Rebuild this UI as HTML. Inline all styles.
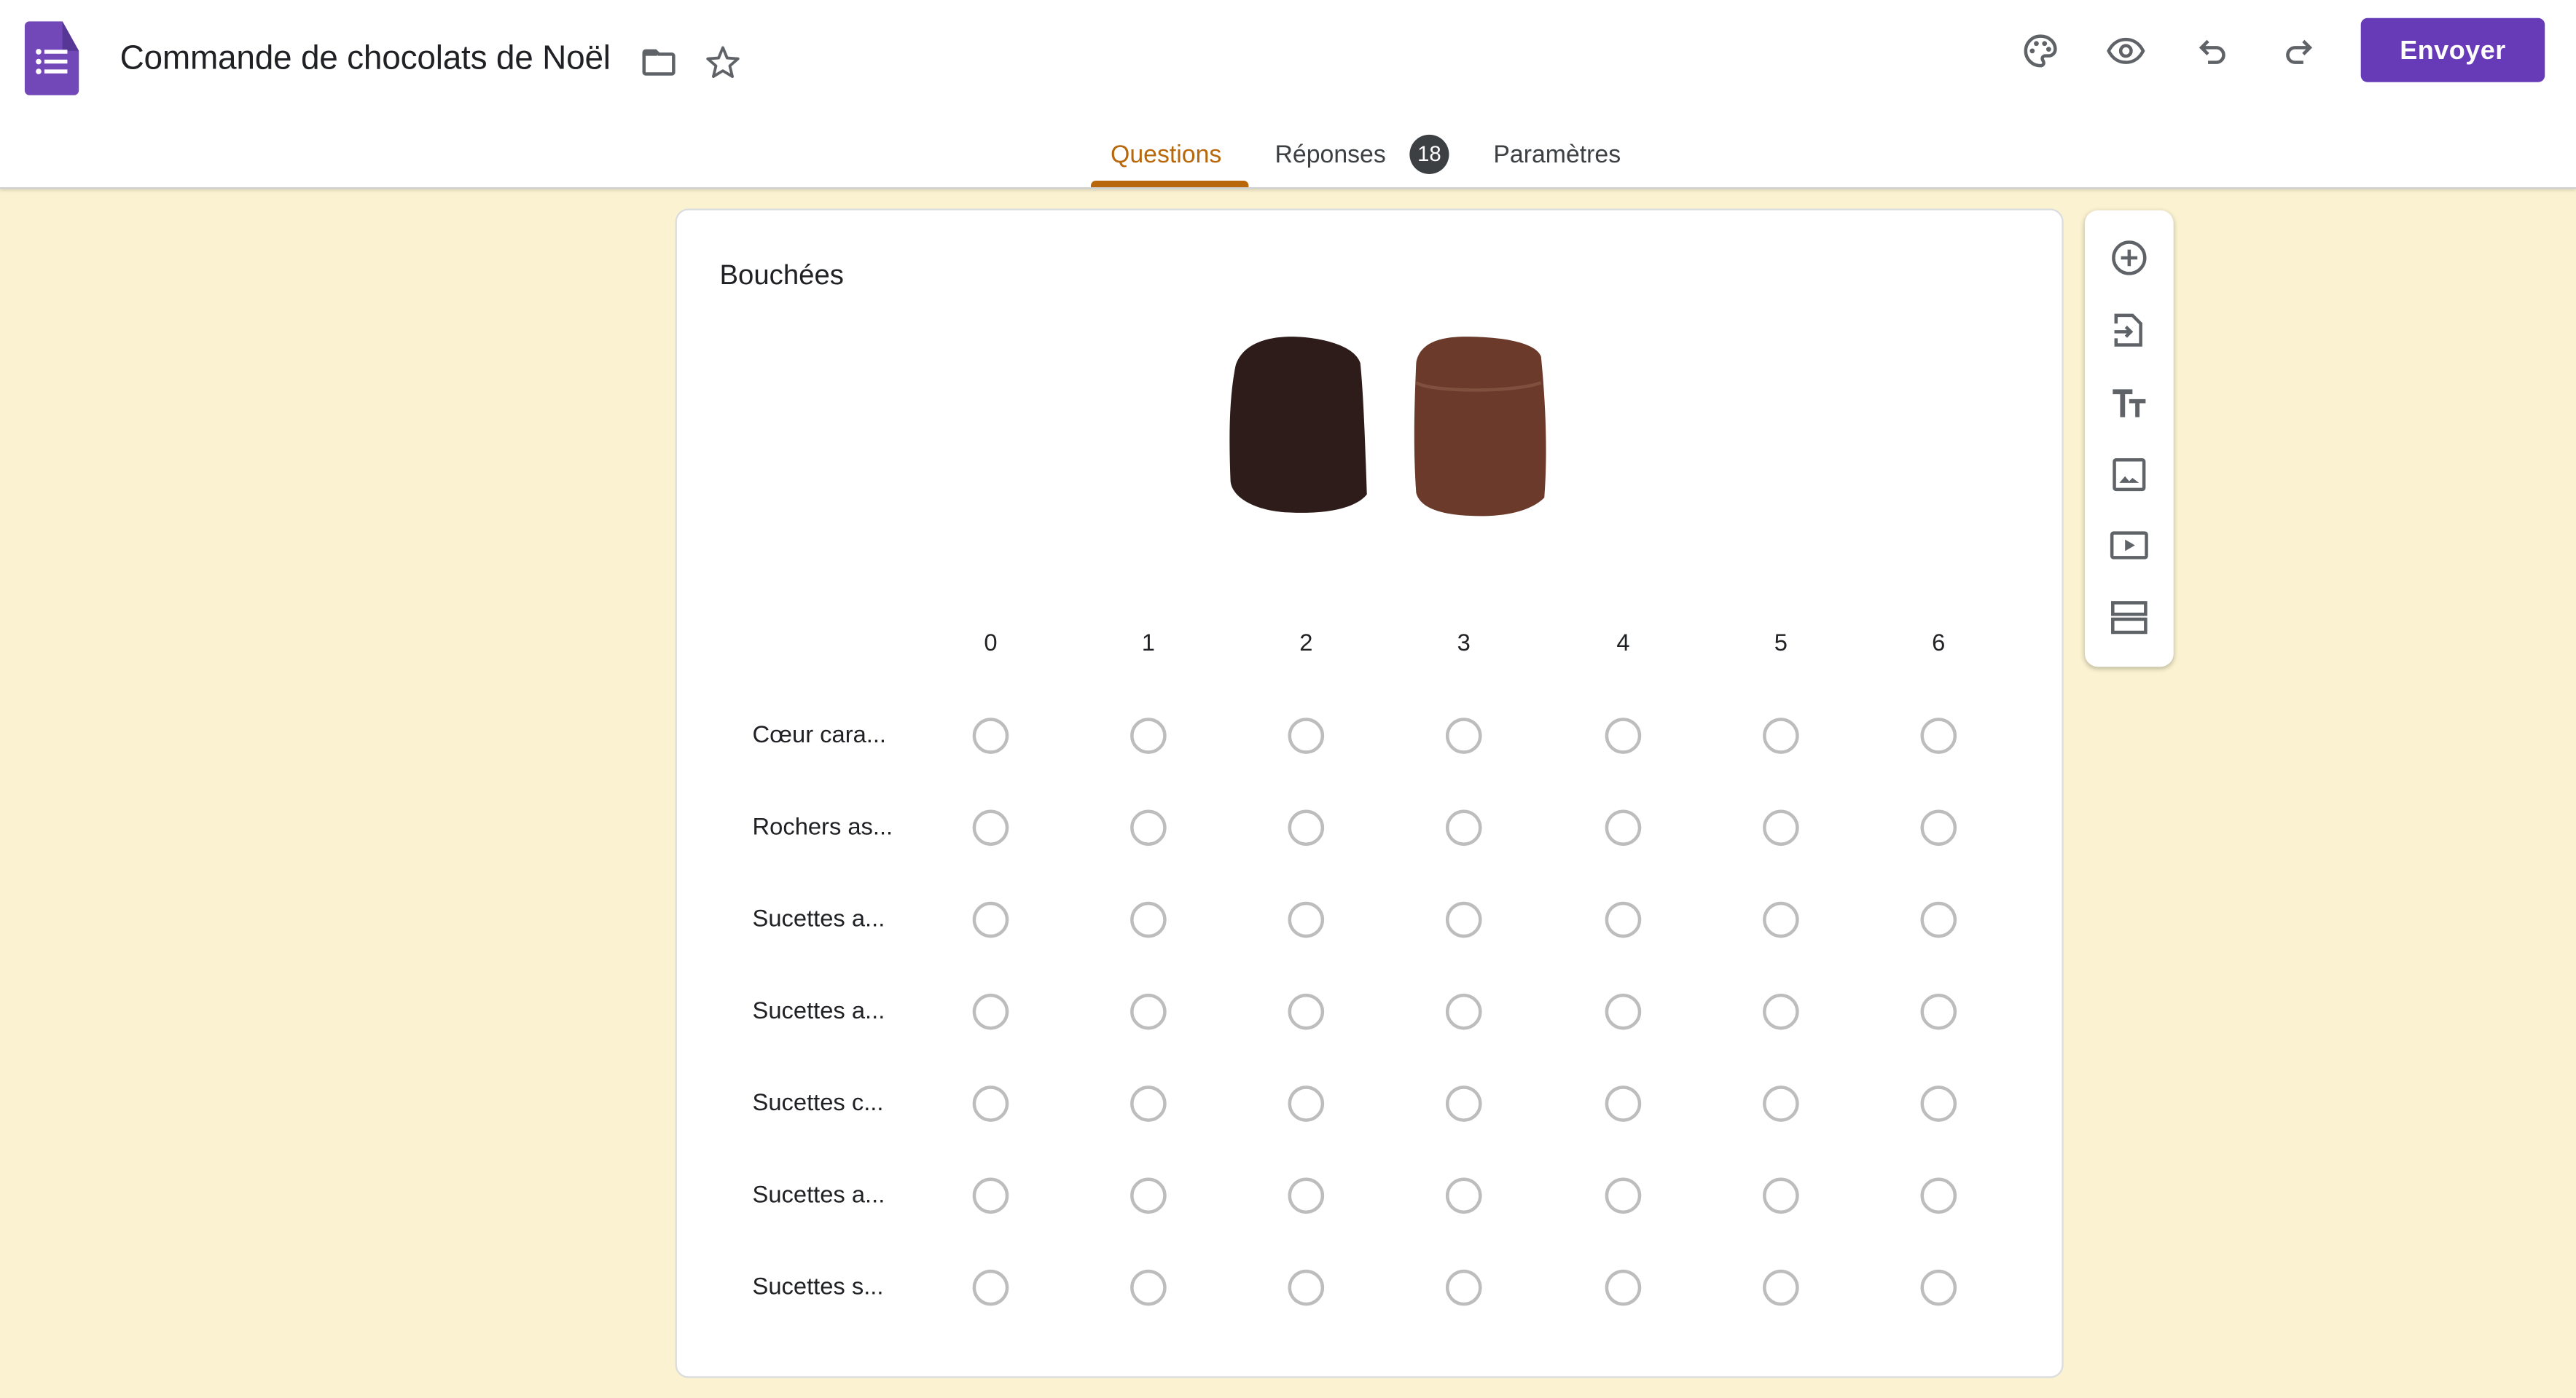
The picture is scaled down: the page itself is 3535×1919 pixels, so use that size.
<!DOCTYPE html>
<html><head><meta charset="utf-8"><style>
html,body{margin:0;padding:0;width:3535px;height:1919px;overflow:hidden;background:#faf2d0}
#w{position:absolute;left:0;top:0;width:1568px;height:851px;transform:scale(2.2545);transform-origin:0 0;font-family:"Liberation Sans",sans-serif;color:#202124}
.a{position:absolute}
.hdr{left:0;top:0;width:1568px;height:114px;background:#fff;border-bottom:1px solid #d0d0d0;box-shadow:0 1px 2px rgba(0,0,0,.15)}
.r{position:absolute;width:18px;height:18px;border:2px solid #bdbdbd;border-radius:50%}
.rl{position:absolute;left:458px;font-size:14.5px;color:#202124}
.cl{position:absolute;font-size:14.5px;width:20px;text-align:center}
svg.i{position:absolute}
</style></head><body><div id="w">
<div class="a hdr"></div>
<svg class="i" style="left:15px;top:13px" width="34" height="45" viewBox="0 0 34 45"><path d="M3 0H23L33 18V42a3 3 0 0 1-3 3H3a3 3 0 0 1-3-3V3a3 3 0 0 1 3-3z" fill="#7248b9"/><path d="M23 0L33 18H23z" fill="#563795"/><g fill="#fff"><circle cx="8.5" cy="18.5" r="1.7"/><circle cx="8.5" cy="24.5" r="1.7"/><circle cx="8.5" cy="30.5" r="1.7"/><rect x="12" y="17.3" width="14" height="2.4"/><rect x="12" y="23.3" width="14" height="2.4"/><rect x="12" y="29.3" width="14" height="2.4"/></g></svg>
<div class="a" style="left:73px;top:25px;font-size:20.4px;letter-spacing:-0.1px">Commande de chocolats de Noël</div>
<svg class="i" style="left:389px;top:26px" width="24" height="24" viewBox="0 0 24 24"><path d="M4 5h6l2 2h8a1 1 0 0 1 1 1v10a1 1 0 0 1-1 1H4a1 1 0 0 1-1-1V6a1 1 0 0 1 1-1z" fill="none" stroke="#5f6368" stroke-width="2"/><rect x="3" y="5" width="8" height="3" fill="#5f6368"/></svg>
<svg class="i" style="left:428px;top:26px" width="24" height="24" viewBox="0 0 24 24"><path d="M12 3l2.6 6.3 6.6.5-5 4.3 1.6 6.5L12 17.1l-5.8 3.5 1.6-6.5-5-4.3 6.6-.5z" fill="none" stroke="#5f6368" stroke-width="1.7" stroke-linejoin="round"/></svg>
<svg class="i" style="left:1230px;top:19px" width="24" height="24" viewBox="0 0 24 24"><path d="M12 3a9 9 0 0 0 0 18c1.3 0 2-.8 2-1.8 0-1-.9-1.5-.9-2.5 0-1 .8-1.700 1.8-1.700H17a4 4 0 0 0 4-4C21 6.5 17 3 12 3z" fill="none" stroke="#5f6368" stroke-width="2"/><g fill="#5f6368"><circle cx="7" cy="12" r="1.5"/><circle cx="9.5" cy="7.5" r="1.5"/><circle cx="14.5" cy="7.5" r="1.5"/><circle cx="17" cy="11" r="1.5"/></g></svg>
<svg class="i" style="left:1282px;top:19px" width="24" height="24" viewBox="0 0 24 24"><path d="M1.5 12C4 7 8 5 12 5s8 2 10.5 7C20 17 16 19 12 19s-8-2-10.5-7z" fill="none" stroke="#5f6368" stroke-width="2"/><circle cx="12" cy="12" r="3.2" fill="none" stroke="#5f6368" stroke-width="2"/></svg>
<svg class="i" style="left:1335px;top:19px" width="24" height="24" viewBox="0 0 24 24"><path d="M9 6L5 10l4 4M5 10h9a4.5 4.5 0 0 1 0 9H9" fill="none" stroke="#5f6368" stroke-width="2"/></svg>
<svg class="i" style="left:1387px;top:19px" width="24" height="24" viewBox="0 0 24 24"><path d="M15 6l4 4-4 4M19 10h-9a4.5 4.5 0 0 0 0 9h5" fill="none" stroke="#5f6368" stroke-width="2"/></svg>
<div class="a" style="left:1437px;top:11px;width:112px;height:39px;background:#673ab7;border-radius:4px;color:#fff;font-size:16px;font-weight:bold;line-height:41px;text-align:center;letter-spacing:.2px">Envoyer</div>
<div class="a" style="left:676px;top:86px;font-size:15px;color:#b8680a">Questions</div>
<div class="a" style="left:664px;top:110px;width:96px;height:4px;background:#b8680a;border-radius:3px 3px 0 0"></div>
<div class="a" style="left:776px;top:86px;font-size:15px;color:#3c4043">Réponses</div>
<div class="a" style="left:858px;top:82px;width:24px;height:24px;border-radius:50%;background:#3c4043;color:#fff;font-size:13px;line-height:24px;text-align:center">18</div>
<div class="a" style="left:909px;top:86px;font-size:15px;color:#3c4043">Paramètres</div>
<div class="a" style="left:411px;top:127px;width:843px;height:710px;background:#fff;border:1px solid #dadce0;border-radius:8px"></div>
<div class="a" style="left:438px;top:158px;font-size:17px">Bouchées</div>
<svg class="i" style="left:744px;top:203px" width="205" height="114" viewBox="0 0 205 114"><path d="M8 20C12 6 28 2 42 2S80 6 84 18c2 20 3 50 4 80-8 10-30 12-48 11C20 108 6 100 5 90 4 65 4 40 8 20z" fill="#2e1c1a"/><path d="M118 18c2-12 14-16 30-16s42 2 46 12c3 30 4 60 2 86-10 10-30 12-46 11-20-1-30-6-32-14-2-28-1-55 0-79z" fill="#6b3a2a"/><path d="M118 30c10 6 60 6 76 0" stroke="#80503e" stroke-width="2" fill="none"/></svg>
<div class="cl" style="left:593px;top:384px">0</div><div class="cl" style="left:689px;top:384px">1</div><div class="cl" style="left:785px;top:384px">2</div><div class="cl" style="left:881px;top:384px">3</div><div class="cl" style="left:978px;top:384px">4</div><div class="cl" style="left:1074px;top:384px">5</div><div class="cl" style="left:1170px;top:384px">6</div>
<div class="rl" style="top:440px">Cœur cara...</div>
<div class="rl" style="top:496px">Rochers as...</div>
<div class="rl" style="top:552px">Sucettes a...</div>
<div class="rl" style="top:608px">Sucettes a...</div>
<div class="rl" style="top:664px">Sucettes c...</div>
<div class="rl" style="top:720px">Sucettes a...</div>
<div class="rl" style="top:776px">Sucettes s...</div>
<div class="a" style="left:1269px;top:128px;width:54px;height:278px;background:#fff;border-radius:8px;box-shadow:0 1px 3px rgba(0,0,0,.25)"></div>
<svg class="i" style="left:1284px;top:145px" width="24" height="24" viewBox="0 0 24 24"><circle cx="12" cy="12" r="9.5" fill="none" stroke="#5f6368" stroke-width="2"/><path d="M12 7v10M7 12h10" stroke="#5f6368" stroke-width="2"/></svg>
<svg class="i" style="left:1284px;top:189px" width="24" height="24" viewBox="0 0 24 24"><path d="M4 8V3h10l5 5v13H4v-4" fill="none" stroke="#5f6368" stroke-width="2"/><path d="M3 13h10M10 10l3 3-3 3" fill="none" stroke="#5f6368" stroke-width="2"/></svg>
<svg class="i" style="left:1284px;top:233px" width="24" height="24" viewBox="0 0 24 24"><path d="M2 4h12v3H9.5v14h-3V7H2zM12 10h10v2.5h-3.7V21h-2.6v-8.5H12z" fill="#5f6368"/></svg>
<svg class="i" style="left:1284px;top:277px" width="24" height="24" viewBox="0 0 24 24"><rect x="3" y="3" width="18" height="18" rx="1" fill="none" stroke="#5f6368" stroke-width="2"/><path d="M6 17l3.5-4 2.5 3 2-2 4 3z" fill="#5f6368"/></svg>
<svg class="i" style="left:1284px;top:320px" width="24" height="24" viewBox="0 0 24 24"><rect x="1.5" y="4.5" width="21" height="15" rx="1" fill="none" stroke="#5f6368" stroke-width="2"/><path d="M9.5 8.5l6 3.5-6 3.5z" fill="#5f6368"/></svg>
<svg class="i" style="left:1284px;top:364px" width="24" height="24" viewBox="0 0 24 24"><rect x="2" y="3" width="20" height="7" fill="none" stroke="#5f6368" stroke-width="2"/><rect x="2" y="13" width="20" height="8" fill="none" stroke="#5f6368" stroke-width="2"/></svg>
<div class="a" style="left:0;top:0">
<div class="r" style="left:592px;top:437px"></div><div class="r" style="left:688px;top:437px"></div><div class="r" style="left:784px;top:437px"></div><div class="r" style="left:880px;top:437px"></div><div class="r" style="left:977px;top:437px"></div><div class="r" style="left:1073px;top:437px"></div><div class="r" style="left:1169px;top:437px"></div>
<div class="r" style="left:592px;top:493px"></div><div class="r" style="left:688px;top:493px"></div><div class="r" style="left:784px;top:493px"></div><div class="r" style="left:880px;top:493px"></div><div class="r" style="left:977px;top:493px"></div><div class="r" style="left:1073px;top:493px"></div><div class="r" style="left:1169px;top:493px"></div>
<div class="r" style="left:592px;top:549px"></div><div class="r" style="left:688px;top:549px"></div><div class="r" style="left:784px;top:549px"></div><div class="r" style="left:880px;top:549px"></div><div class="r" style="left:977px;top:549px"></div><div class="r" style="left:1073px;top:549px"></div><div class="r" style="left:1169px;top:549px"></div>
<div class="r" style="left:592px;top:605px"></div><div class="r" style="left:688px;top:605px"></div><div class="r" style="left:784px;top:605px"></div><div class="r" style="left:880px;top:605px"></div><div class="r" style="left:977px;top:605px"></div><div class="r" style="left:1073px;top:605px"></div><div class="r" style="left:1169px;top:605px"></div>
<div class="r" style="left:592px;top:661px"></div><div class="r" style="left:688px;top:661px"></div><div class="r" style="left:784px;top:661px"></div><div class="r" style="left:880px;top:661px"></div><div class="r" style="left:977px;top:661px"></div><div class="r" style="left:1073px;top:661px"></div><div class="r" style="left:1169px;top:661px"></div>
<div class="r" style="left:592px;top:717px"></div><div class="r" style="left:688px;top:717px"></div><div class="r" style="left:784px;top:717px"></div><div class="r" style="left:880px;top:717px"></div><div class="r" style="left:977px;top:717px"></div><div class="r" style="left:1073px;top:717px"></div><div class="r" style="left:1169px;top:717px"></div>
<div class="r" style="left:592px;top:773px"></div><div class="r" style="left:688px;top:773px"></div><div class="r" style="left:784px;top:773px"></div><div class="r" style="left:880px;top:773px"></div><div class="r" style="left:977px;top:773px"></div><div class="r" style="left:1073px;top:773px"></div><div class="r" style="left:1169px;top:773px"></div>
</div>
</div></body></html>
